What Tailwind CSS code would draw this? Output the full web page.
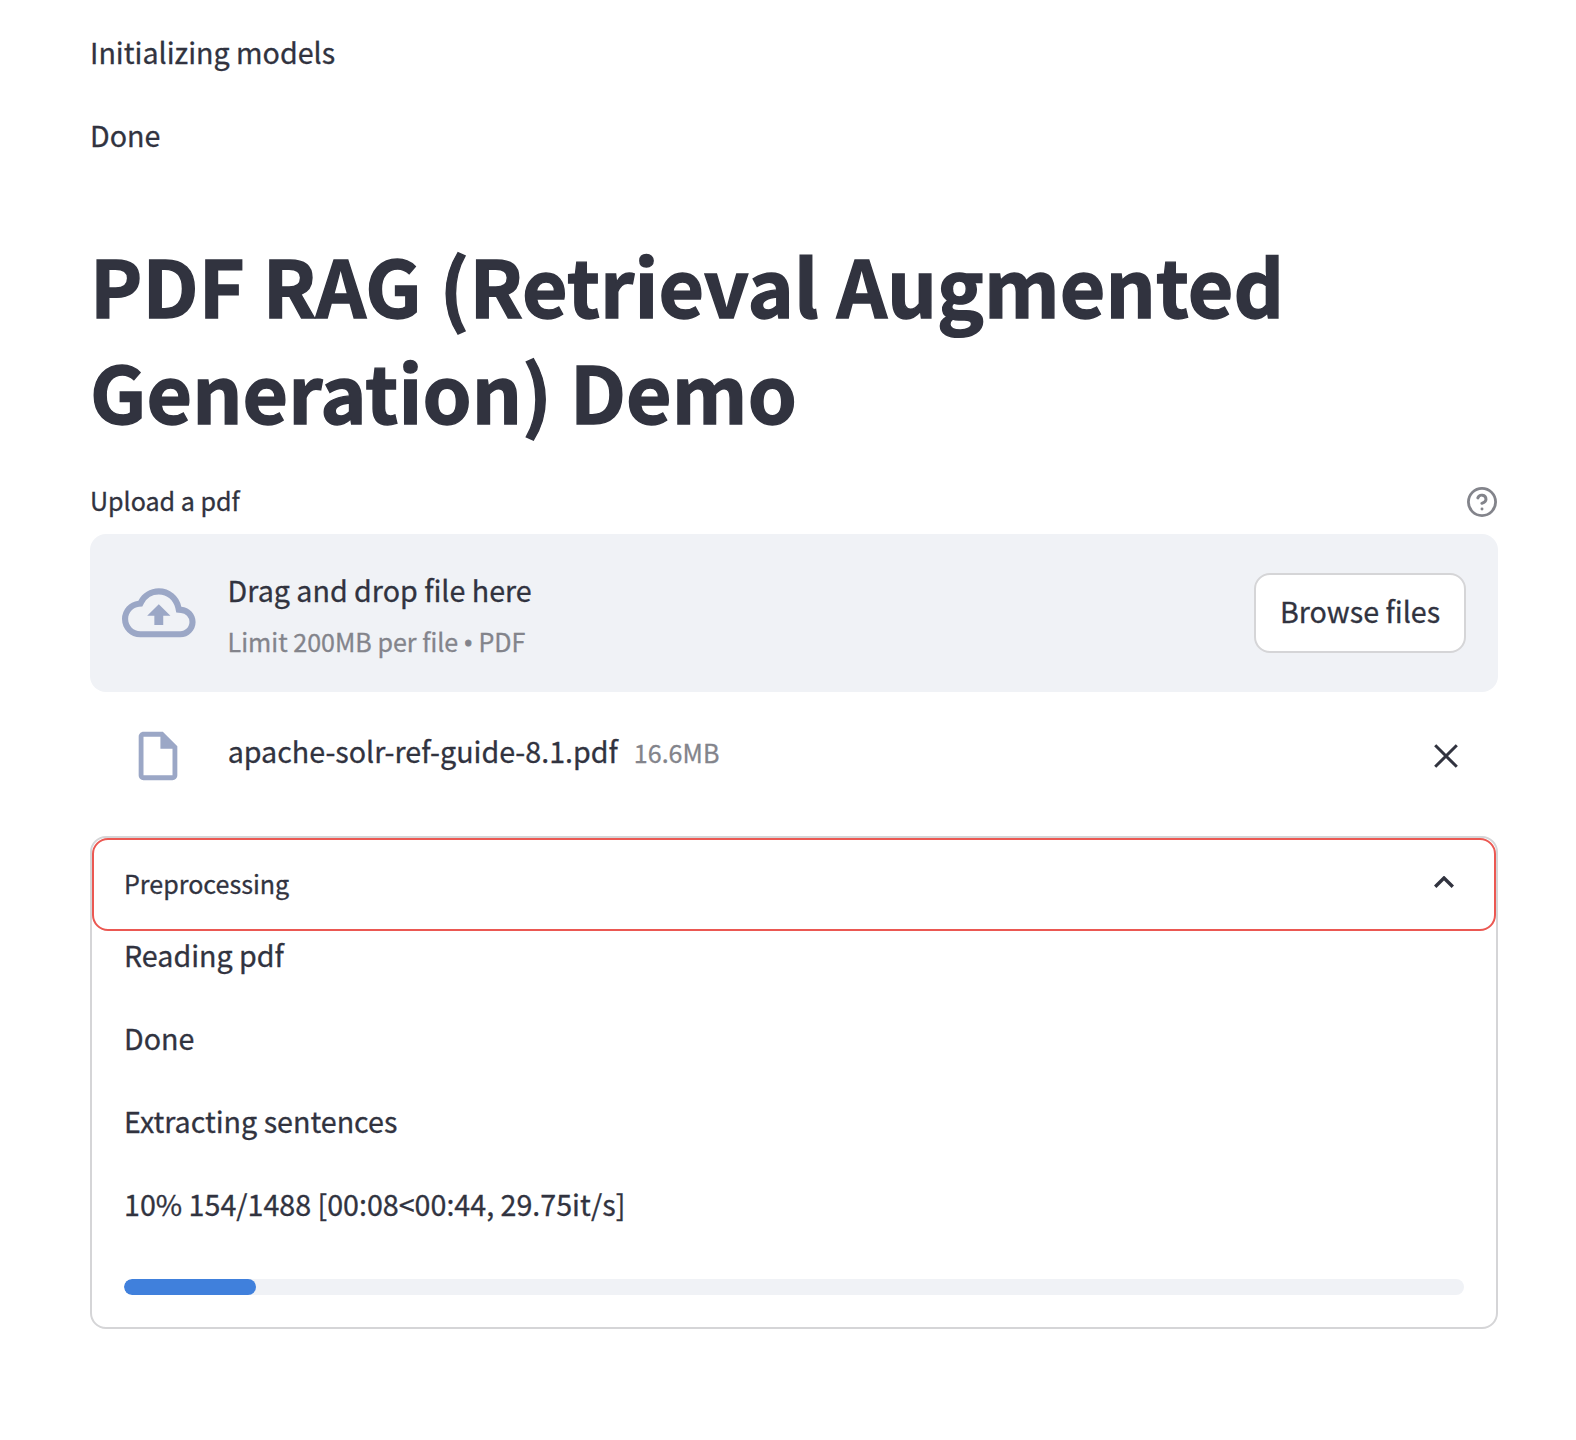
<!DOCTYPE html>
<html lang="en">
<head>
<meta charset="utf-8">
<title>PDF RAG Demo</title>
<script src="https://cdn.jsdelivr.net/npm/@tailwindcss/browser@4"></script>
</head>
<body class="bg-white">
<main class="flex h-[1440px] w-[1576px] flex-col overflow-hidden pt-[26px] pr-[78px] pl-[90px] font-['Noto_Sans_CJK_SC',sans-serif] text-[28.65px] leading-[51px] text-[#31333f] [-webkit-text-stroke:0.3px]">
  <p>Initializing models</p>
  <p class="mt-8">Done</p>
  <h1 class="mt-[71px] text-[78.5px] leading-[106px] font-bold tracking-[0.13px] [-webkit-text-stroke:1.4px]">PDF RAG (Retrieval Augmented<br>Generation) Demo</h1>

  <section>
    <div class="mt-[34px] flex h-[46px] items-center justify-between text-[25.07px] leading-[46px]">
      <span>Upload a pdf</span>
      <svg class="mt-[3px] size-8" viewBox="0 0 24 24" fill="none" stroke="#83848b" stroke-width="2.1" stroke-linecap="round" stroke-linejoin="round"><circle cx="12" cy="12" r="10.2"/><path stroke-width="2.2" d="M8.9 8.900a3.150 3.150 0 0 1 6.100 1c0 2.100-3.100 3.100-3.100 3.100M12 17.200h.01"/></svg>
    </div>
    <div class="mt-[11px] flex h-[158px] items-center rounded-2xl bg-[#f0f2f6] px-8">
      <svg class="size-[73.6px]" viewBox="0 0 24 24" fill="#9ba7c6"><path d="M19.35 10.04A7.49 7.49 0 0 0 12 4C9.11 4 6.6 5.64 5.35 8.04A5.994 5.994 0 0 0 0 14c0 3.31 2.69 6 6 6h13c2.76 0 5-2.24 5-5 0-2.64-2.05-4.78-4.65-4.96zM19 18H6c-2.21 0-4-1.79-4-4 0-2.05 1.53-3.76 3.56-3.97l1.07-.11.5-.95A5.469 5.469 0 0 1 12 6c2.62 0 4.88 1.86 5.39 4.43l.3 1.5 1.53.11A2.98 2.98 0 0 1 22 15c0 1.65-1.35 3-3 3zM8.2 13h2.35v3h2.9v-3h2.35L12 9.2z"/></svg>
      <div class="mt-[4px] ml-8 flex grow flex-col">
        <span class="h-[52px]">Drag and drop file here</span>
        <span class="h-[51px] text-[25.07px] text-[#83848b]">Limit 200MB per file <span class="font-['Noto_Sans'] text-[24px] leading-none [-webkit-text-stroke:1px]">•</span> PDF</span>
      </div>
      <button class="h-20 w-[212px] rounded-2xl border-2 border-[#d5d5d7] bg-white pb-[4px] leading-[72px]">Browse files</button>
    </div>
    <div class="mt-8 flex h-16 items-center pr-[38px] pl-[39px]">
      <svg class="-mt-[1px] size-[58px]" viewBox="0 0 24 24" fill="#9ba7c6"><path d="M6 2c-1.100 0-1.990.9-1.990 2L4 20c0 1.100.89 2 1.990 2H18c1.100 0 2-.9 2-2V8l-6-6H6zm0 2h7v5h5v11H6V4z"/></svg>
      <span class="-mt-[11px] ml-[40.700px]">apache-solr-ref-guide-8.1.pdf</span>
      <span class="-mt-[7px] ml-4 grow text-[25.07px] text-[#83848b]">16.6MB</span>
      <svg class="size-7" viewBox="0 0 28 28" fill="none" stroke="#31333f" stroke-width="3"><path d="M3.200 3.200l21.600 21.600M24.800 3.200L3.200 24.800"/></svg>
    </div>
  </section>

  <section class="mt-[48px] h-[493px] rounded-2xl border-2 border-[#d5d5d7]">
    <div class="flex h-[93px] items-center justify-between rounded-2xl border-2 border-[#eb5852] pr-[40px] pl-[30px] text-[25.07px]">
      <span class="-mt-[3px]">Preprocessing</span>
      <svg class="-mt-[5px] h-3 w-5" viewBox="0 0 20 12" fill="none" stroke="#31333f" stroke-width="3.400"><path d="M1.200 10.800L10 2l8.800 8.800"/></svg>
    </div>
    <div class="-mt-[2px] flex flex-col gap-8 px-8">
      <p>Reading pdf</p>
      <p>Done</p>
      <p>Extracting sentences</p>
      <p>10% 154/1488 [00:08&lt;00:44, 29.75it/s]</p>
      <div class="mt-[18px] h-4 overflow-hidden rounded-full bg-[#f0f2f6]"><div class="h-full w-[132px] rounded-full bg-[#4080dc]"></div></div>
    </div>
  </section>
</main>
</body>
</html>
